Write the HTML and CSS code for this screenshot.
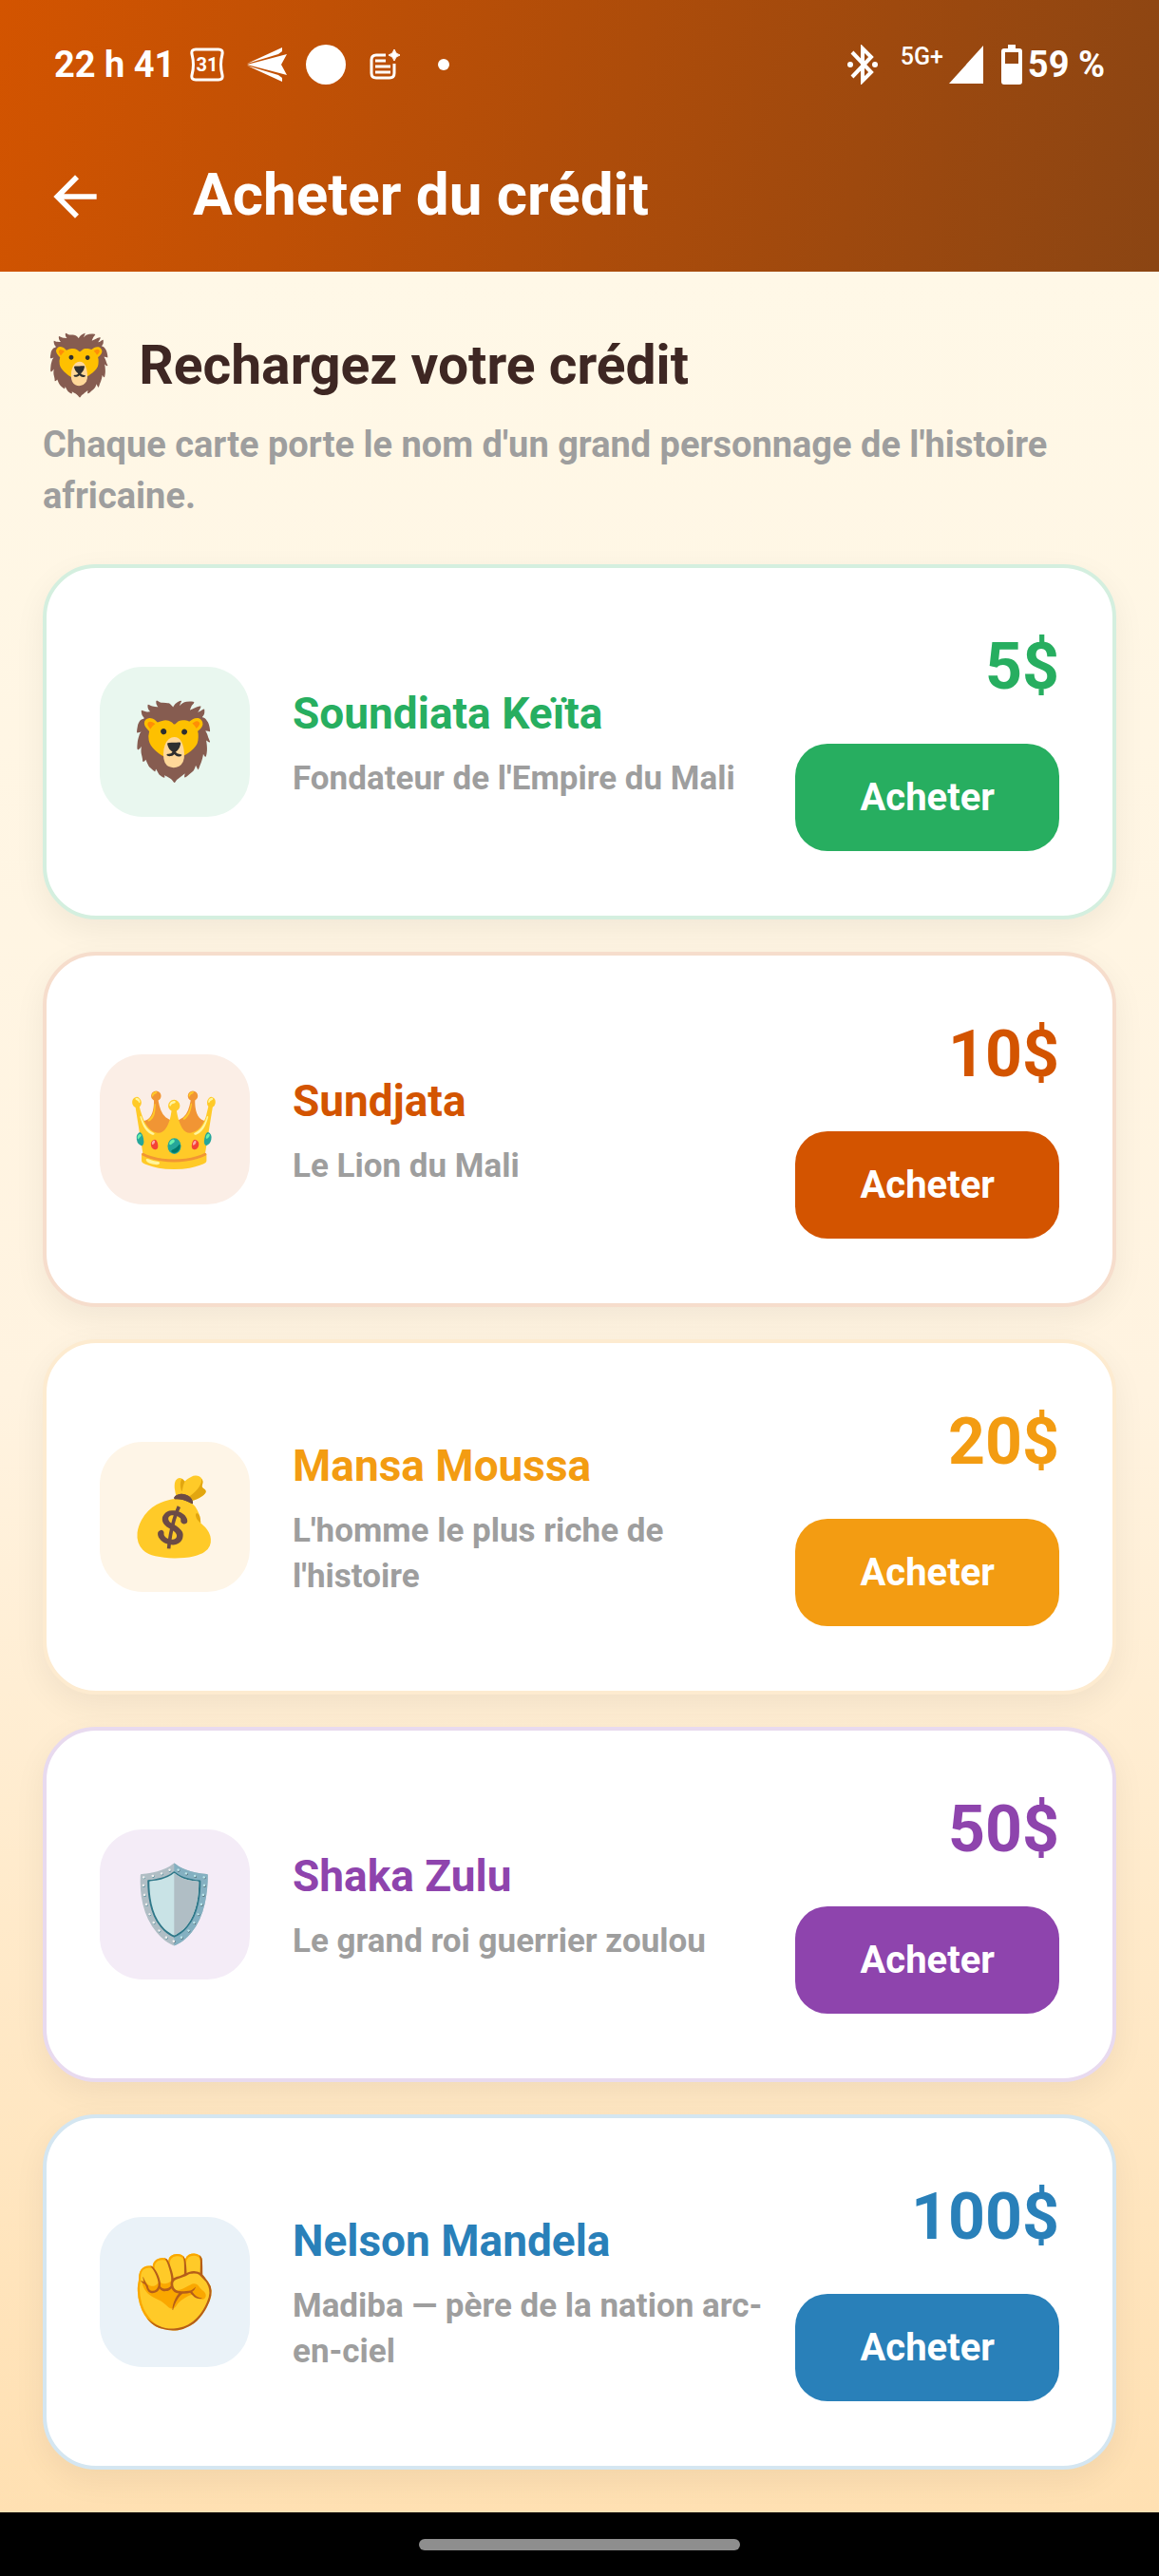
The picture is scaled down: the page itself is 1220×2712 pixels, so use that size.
FILE: index.html
```html
<!DOCTYPE html>
<html lang="fr">
<head>
<meta charset="utf-8">
<meta name="viewport" content="width=device-width, initial-scale=1">
<title>Acheter du crédit</title>
<link rel="stylesheet" href="styles.css">
</head>
<body>
<header class="header">
  <div class="status">
    <div class="status-left">
      <span class="status-text">22 h 41</span>
      <svg class="icon-calendar" viewBox="0 0 36 36" aria-hidden="true"><path d="M6 2h24q5 0 4 5-3 11 0 22 1 5-4 5H6q-5 0-4-5 3-11 0-22-1-5 4-5z" fill="none" stroke="#fff" stroke-width="3"/><text x="18" y="25" text-anchor="middle" class="calendar-day">31</text></svg>
      <svg class="icon-plane" viewBox="0 0 42 36" aria-hidden="true"><g fill="#fff"><path d="M0 18 42 7l-6 11 6 11z"/><path d="M0 17 37 0v4L33 7z"/><path d="M0 19l37 17v-4l-4-3z"/></g></svg>
      <span class="icon-circle"></span>
      <svg class="icon-note" viewBox="0 0 32 32" aria-hidden="true"><path d="M17 6H7Q2 6 2 11v14q0 5 5 5h14q5 0 5-5V15" fill="none" stroke="#fff" stroke-width="3"/><path d="M6 12h11M6 18h16M6 24h16" stroke="#fff" stroke-width="3"/><path d="M26 0q1 5 6 6-5 1-6 6-1-5-6-6 5-1 6-6z" fill="#fff" stroke="#fff"/></svg>
      <span class="icon-dot"></span>
    </div>
    <div class="status-right">
      <svg class="icon-bluetooth" viewBox="0 0 32 42" aria-hidden="true"><path d="M5 8l20 21-9 9V4l9 9L5 34" fill="none" stroke="#fff" stroke-width="4"/><circle cx="3" cy="21" r="3" fill="#fff"/><circle cx="29" cy="21" r="3" fill="#fff"/></svg>
      <span class="network">5G+</span>
      <svg class="icon-signal" viewBox="0 0 36 40" aria-hidden="true"><path d="M36 0v40H0z" fill="#fff"/></svg>
      <svg class="icon-battery" viewBox="0 0 22 42" aria-hidden="true"><path fill-rule="evenodd" d="M7 0h8v4h4q3 0 3 3v32q0 3-3 3H3q-3 0-3-3V7q0-3 3-3h4zM4 8v12h14V8z" fill="#fff"/></svg>
      <span class="status-text">59 %</span>
    </div>
  </div>
  <div class="appbar">
    <button class="back" type="button" aria-label="Retour"><svg viewBox="0 0 24 24" aria-hidden="true"><path d="M20 11H7.83l5.59-5.59L12 4l-8 8 8 8 1.41-1.41L7.83 13H20v-2z" fill="#fff"/></svg></button>
    <h1 class="title">Acheter du crédit</h1>
  </div>
</header>
<main class="content">
  <div class="intro">
    <h2 class="heading"><span class="heading-emoji">🦁</span>Rechargez votre crédit</h2>
    <p class="lead">Chaque carte porte le nom d'un grand personnage de l'histoire africaine.</p>
  </div>
  <ul class="cards">
    <li class="card green">
      <span class="tile">🦁</span>
      <div class="info"><h3 class="name">Soundiata Keïta</h3><p class="desc">Fondateur de l'Empire du Mali</p></div>
      <div class="buy"><span class="price">5$</span><button class="buy-button" type="button">Acheter</button></div>
    </li>
    <li class="card orange">
      <span class="tile">👑</span>
      <div class="info"><h3 class="name">Sundjata</h3><p class="desc">Le Lion du Mali</p></div>
      <div class="buy"><span class="price">10$</span><button class="buy-button" type="button">Acheter</button></div>
    </li>
    <li class="card yellow">
      <span class="tile">💰</span>
      <div class="info"><h3 class="name">Mansa Moussa</h3><p class="desc">L'homme le plus riche de l'histoire</p></div>
      <div class="buy"><span class="price">20$</span><button class="buy-button" type="button">Acheter</button></div>
    </li>
    <li class="card purple">
      <span class="tile">🛡️</span>
      <div class="info"><h3 class="name">Shaka Zulu</h3><p class="desc">Le grand roi guerrier zoulou</p></div>
      <div class="buy"><span class="price">50$</span><button class="buy-button" type="button">Acheter</button></div>
    </li>
    <li class="card blue">
      <span class="tile">✊</span>
      <div class="info"><h3 class="name">Nelson Mandela</h3><p class="desc">Madiba — père de la nation arc-en-ciel</p></div>
      <div class="buy"><span class="price">100$</span><button class="buy-button" type="button">Acheter</button></div>
    </li>
  </ul>
</main>
<footer class="navbar"><span class="handle"></span></footer>
</body>
</html>
```
FILE: styles.css
```css
* { box-sizing: border-box; }

body {
  margin: 0;
  min-height: 100vh;
  display: flex;
  flex-direction: column;
  font-family: Roboto, "Liberation Sans", "Noto Color Emoji", sans-serif;
  font-weight: 700;
}

h1, h2, h3, p, ul { margin: 0; padding: 0; font-weight: 700; }

button { font: inherit; border: 0; padding: 0; cursor: pointer; }

svg { display: block; flex: none; }

/* Header */
.header {
  color: #fff;
  background: linear-gradient(103deg, #d35400, #8b4513);
}

.status {
  display: flex;
  justify-content: space-between;
  align-items: center;
  height: 128px;
  padding: 8px 57px 0;
}

.status-left, .status-right { display: flex; align-items: center; }
.status-text { font-size: 38px; line-height: 48px; white-space: nowrap; }

.icon-calendar { width: 36px; height: 36px; margin-left: 16px; }
.calendar-day { font-size: 20px; font-weight: 700; fill: #fff; }
.icon-plane { width: 42px; height: 36px; margin-left: 24px; }
.icon-circle { width: 42px; height: 42px; margin-left: 20px; border-radius: 50%; background: #fff; }
.icon-note { width: 32px; height: 34px; margin-left: 25px; }
.icon-dot { width: 12px; height: 12px; margin-left: 40px; border-radius: 50%; background: #fff; }

.icon-bluetooth { width: 32px; height: 42px; margin-right: 24px; }
.network { font-size: 25px; line-height: 28px; font-weight: 500; margin: 0 6px 16px 0; }
.icon-signal { width: 36px; height: 40px; margin-right: 19px; }
.icon-battery { width: 22px; height: 42px; margin-right: 6px; }

.appbar {
  display: flex;
  align-items: center;
  gap: 90px;
  height: 158px;
  padding: 0 45px;
}

.back { width: 68px; height: 68px; background: none; }
.title { font-size: 62px; line-height: 80px; padding-bottom: 4px; }

/* Page body */
.content {
  flex: 1;
  padding: 54px 45px 45px;
  background: linear-gradient(#fff8e7, #fff3e0, #ffe0b2);
}

.intro { display: flex; flex-direction: column; gap: 11px; margin-bottom: 45px; }

.heading {
  display: flex;
  align-items: center;
  gap: 24px;
  color: #3e2723;
  font-size: 57px;
  line-height: 90px;
}

.heading-emoji { font-size: 62px; }
.lead { color: #9e9e9e; font-size: 38px; line-height: 54px; }

.cards { display: flex; flex-direction: column; gap: 34px; list-style: none; }

.card {
  display: flex;
  align-items: center;
  padding: 56px;
  border: 4px solid color-mix(in srgb, var(--accent) 20%, #fff);
  border-radius: 56px;
  background: #fff;
  box-shadow: 0 11px 34px rgba(0, 0, 0, 0.06);
}

.green { --accent: #27ae60; }
.orange { --accent: #d35400; }
.yellow { --accent: #f39c12; }
.purple { --accent: #8e44ad; }
.blue { --accent: #2980b9; }

.tile {
  display: flex;
  flex: none;
  align-items: center;
  justify-content: center;
  width: 158px;
  height: 158px;
  margin-right: 45px;
  border-radius: 45px;
  background: color-mix(in srgb, var(--accent) 10%, #fff);
  font-size: 79px;
  line-height: 112px;
}

.info { display: flex; flex: 1; flex-direction: column; gap: 12px; }
.name { color: var(--accent); font-size: 46px; line-height: 66px; }
.desc { color: #9e9e9e; font-size: 35px; line-height: 48px; }

.buy { display: flex; flex-direction: column; align-items: flex-end; gap: 33px; margin-left: 22px; padding-bottom: 12px; }
.price { color: var(--accent); font-size: 68px; line-height: 96px; }

.buy-button {
  padding: 0 68px;
  border-radius: 34px;
  background: var(--accent);
  color: #fff;
  font-size: 40px;
  line-height: 113px;
}

/* System navigation */
.navbar { display: flex; align-items: center; justify-content: center; height: 68px; background: #000; }
.handle { width: 338px; height: 12px; border-radius: 6px; background: #8e8e8e; }
```
